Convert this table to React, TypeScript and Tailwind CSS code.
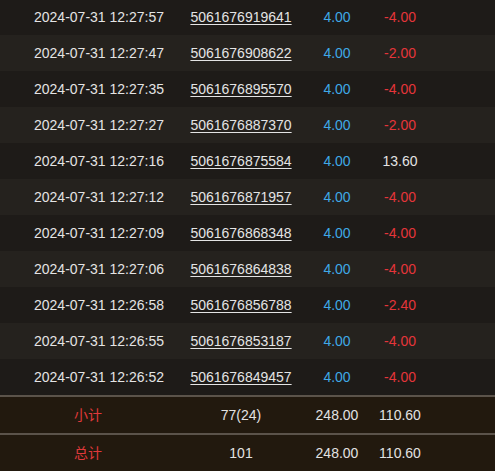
import React from 'react';

interface Row {
  time: string;
  orderId: string;
  bet: string;
  win: string;
}

const rows: Row[] = [
  { time: '2024-07-31 12:27:57', orderId: '5061676919641', bet: '4.00', win: '-4.00' },
  { time: '2024-07-31 12:27:47', orderId: '5061676908622', bet: '4.00', win: '-2.00' },
  { time: '2024-07-31 12:27:35', orderId: '5061676895570', bet: '4.00', win: '-4.00' },
  { time: '2024-07-31 12:27:27', orderId: '5061676887370', bet: '4.00', win: '-2.00' },
  { time: '2024-07-31 12:27:16', orderId: '5061676875584', bet: '4.00', win: '13.60' },
  { time: '2024-07-31 12:27:12', orderId: '5061676871957', bet: '4.00', win: '-4.00' },
  { time: '2024-07-31 12:27:09', orderId: '5061676868348', bet: '4.00', win: '-4.00' },
  { time: '2024-07-31 12:27:06', orderId: '5061676864838', bet: '4.00', win: '-4.00' },
  { time: '2024-07-31 12:26:58', orderId: '5061676856788', bet: '4.00', win: '-2.40' },
  { time: '2024-07-31 12:26:55', orderId: '5061676853187', bet: '4.00', win: '-4.00' },
  { time: '2024-07-31 12:26:52', orderId: '5061676849457', bet: '4.00', win: '-4.00' },
];

function SummaryRow({ label, count, bet, win }: { label: string; count: string; bet: string; win: string }) {
  return (
    <div className="flex h-[36px] items-center bg-[#22190e] text-[14px] text-[#e2e2e2]">
      <div className="flex w-[176px] justify-center whitespace-nowrap text-[#e0393b]">{label}</div>
      <div className="flex w-[130px] justify-center whitespace-nowrap">{count}</div>
      <div className="flex w-[62px] justify-center whitespace-nowrap">{bet}</div>
      <div className="flex w-[64px] justify-center whitespace-nowrap">{win}</div>
    </div>
  );
}

export default function App() {
  return (
    <div
      className="h-[471px] w-[495px] overflow-hidden bg-[#1e1b18]"
      style={{ fontFamily: '"Liberation Sans", Arial, "Noto Sans CJK SC", sans-serif' }}
    >
      <div className="-mt-px">
        {rows.map((r, i) => {
          const negative = r.win.startsWith('-');
          return (
            <div
              key={r.orderId}
              className={`flex h-[36px] items-center text-[14px] text-[#e4e4e4] ${i % 2 === 0 ? 'bg-[#1e1b18]' : 'bg-[#25221e]'}`}
            >
              <div className="flex w-[196px] justify-center whitespace-nowrap pl-[2px]">{r.time}</div>
              <div className="flex w-[90px] justify-center whitespace-nowrap">
                <a className="cursor-pointer underline underline-offset-2">{r.orderId}</a>
              </div>
              <div className="flex w-[102px] justify-center whitespace-nowrap text-[#3fa9e6]">{r.bet}</div>
              <div className={`flex w-[24px] justify-center whitespace-nowrap ${negative ? 'text-[#e5353a]' : ''}`}>
                {r.win}
              </div>
            </div>
          );
        })}
      </div>

      {/* Totals */}
      <div className="border-t-2 border-[#5b534a]">
        <SummaryRow label="小计" count="77(24)" bet="248.00" win="110.60" />
      </div>
      <div className="border-t-2 border-[#5b534a]">
        <SummaryRow label="总计" count="101" bet="248.00" win="110.60" />
      </div>
    </div>
  );
}
